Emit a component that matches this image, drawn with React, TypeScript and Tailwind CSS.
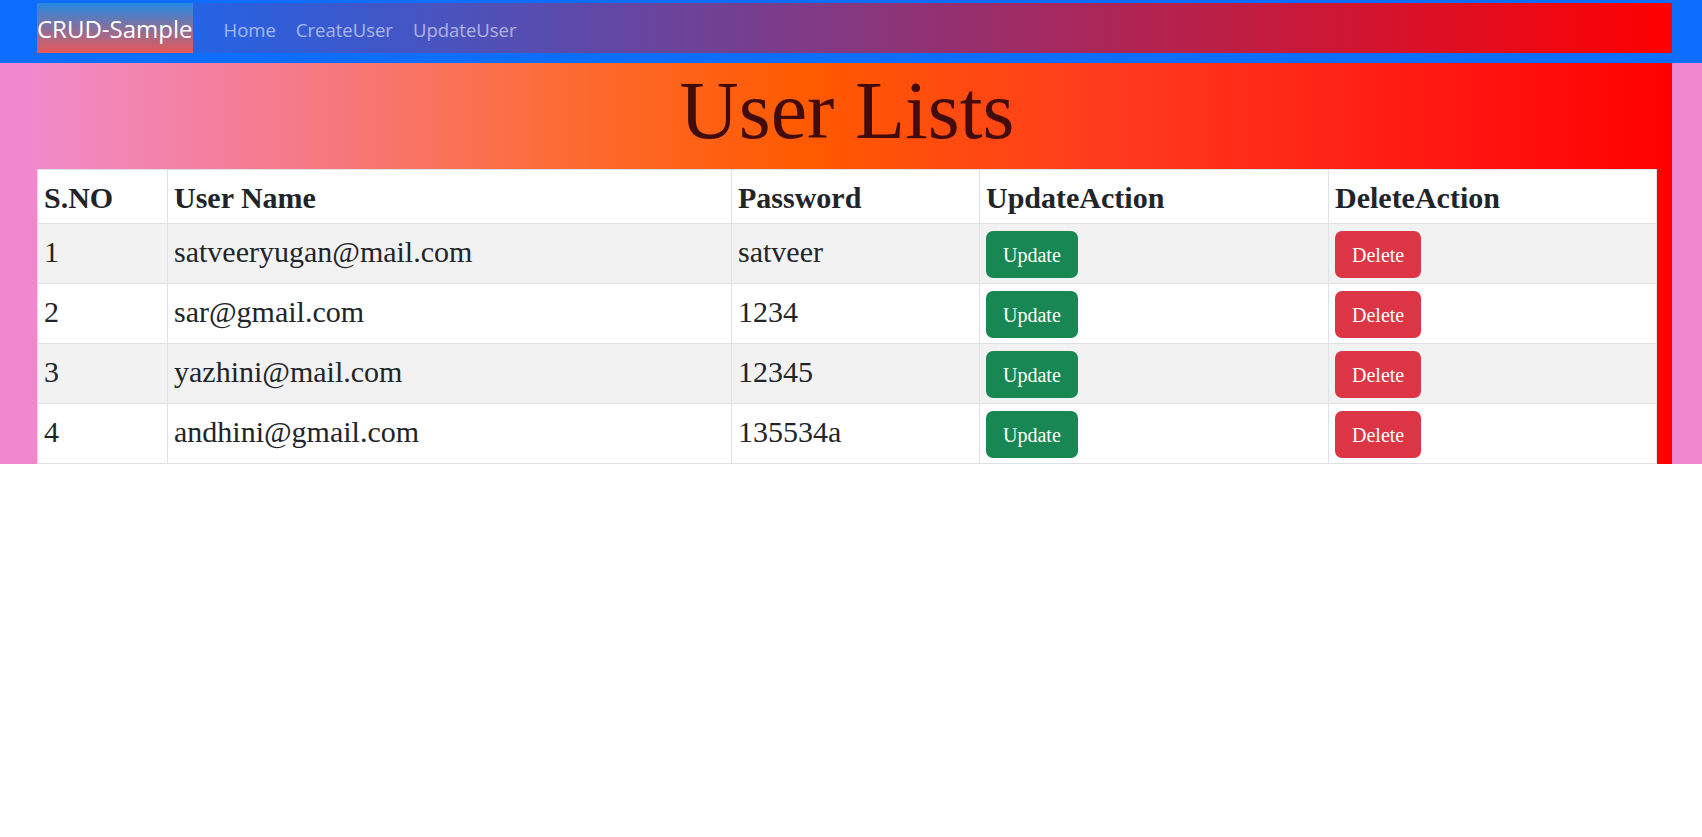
import React from "react";

const users = [
  { id: 1, name: "satveeryugan@mail.com", password: "satveer" },
  { id: 2, name: "sar@gmail.com", password: "1234" },
  { id: 3, name: "yazhini@mail.com", password: "12345" },
  { id: 4, name: "andhini@gmail.com", password: "135534a" },
];

const serif = "font-['Liberation_Serif',serif]";
const cell = "border border-[#dee2e6] px-[6px] pt-[5px] align-top";

export default function App() {
  return (
    <div className="min-h-screen bg-white">
      <nav className="bg-[#0d6efd] pt-[3px] pb-[10px]">
        <div className="ml-[37px] mr-[30px] flex h-[50px] items-stretch bg-[linear-gradient(to_right,#0d6efd,#ff0000)] font-['Open_Sans',sans-serif]">
          <a className="flex items-center bg-[linear-gradient(to_bottom,#2489e2,#e95858)] pt-[2px] text-[24px] leading-none text-white">
            CRUD-Sample
          </a>
          <ul className="ml-[21px] flex items-center pt-[3px] text-[18.5px] text-white/55">
            <li className="px-[10px]">Home</li>
            <li className="px-[10px]">CreateUser</li>
            <li className="px-[10px]">UpdateUser</li>
          </ul>
        </div>
      </nav>

      <main className="bg-[#f088d0] pl-[37px] pr-[30px]">
        <div className={`bg-[linear-gradient(to_right,#f08ac8,#f57a88_16%,#fd6a30_33%,#ff5a00_47%,#ff3c1e_65%,#ff1410_88%,#ff0000)] pr-[15px] ${serif}`}>
          <h1 className="mb-[10px] text-center text-[82px] leading-[96px] text-[#420c0c]">
            User Lists
          </h1>
          <table className="w-full table-fixed border-collapse bg-white text-[30px] leading-[45px] text-[#212529]">
            <colgroup>
              <col className="w-[130px]" />
              <col className="w-[564px]" />
              <col className="w-[248px]" />
              <col className="w-[349px]" />
              <col />
            </colgroup>
            <thead>
              <tr className="h-[54px] text-left font-bold">
                <th className={cell}>S.NO</th>
                <th className={cell}>User Name</th>
                <th className={cell}>Password</th>
                <th className={cell}>UpdateAction</th>
                <th className={cell}>DeleteAction</th>
              </tr>
            </thead>
            <tbody>
              {users.map((u, i) => (
                <tr key={u.id} className={i % 2 === 0 ? "h-[60px] bg-[#f2f2f2]" : "h-[60px] bg-white"}>
                  <td className={cell}>{u.id}</td>
                  <td className={cell}>{u.name}</td>
                  <td className={cell}>{u.password}</td>
                  <td className={cell}>
                    <button className="mt-[2px] flex h-[47px] items-center rounded-[7px] bg-[#198754] px-[17px] text-[20px] leading-none text-white">
                      Update
                    </button>
                  </td>
                  <td className={cell}>
                    <button className="mt-[2px] flex h-[47px] items-center rounded-[7px] bg-[#dc3545] px-[17px] text-[20px] leading-none text-white">
                      Delete
                    </button>
                  </td>
                </tr>
              ))}
            </tbody>
          </table>
        </div>
      </main>
    </div>
  );
}
